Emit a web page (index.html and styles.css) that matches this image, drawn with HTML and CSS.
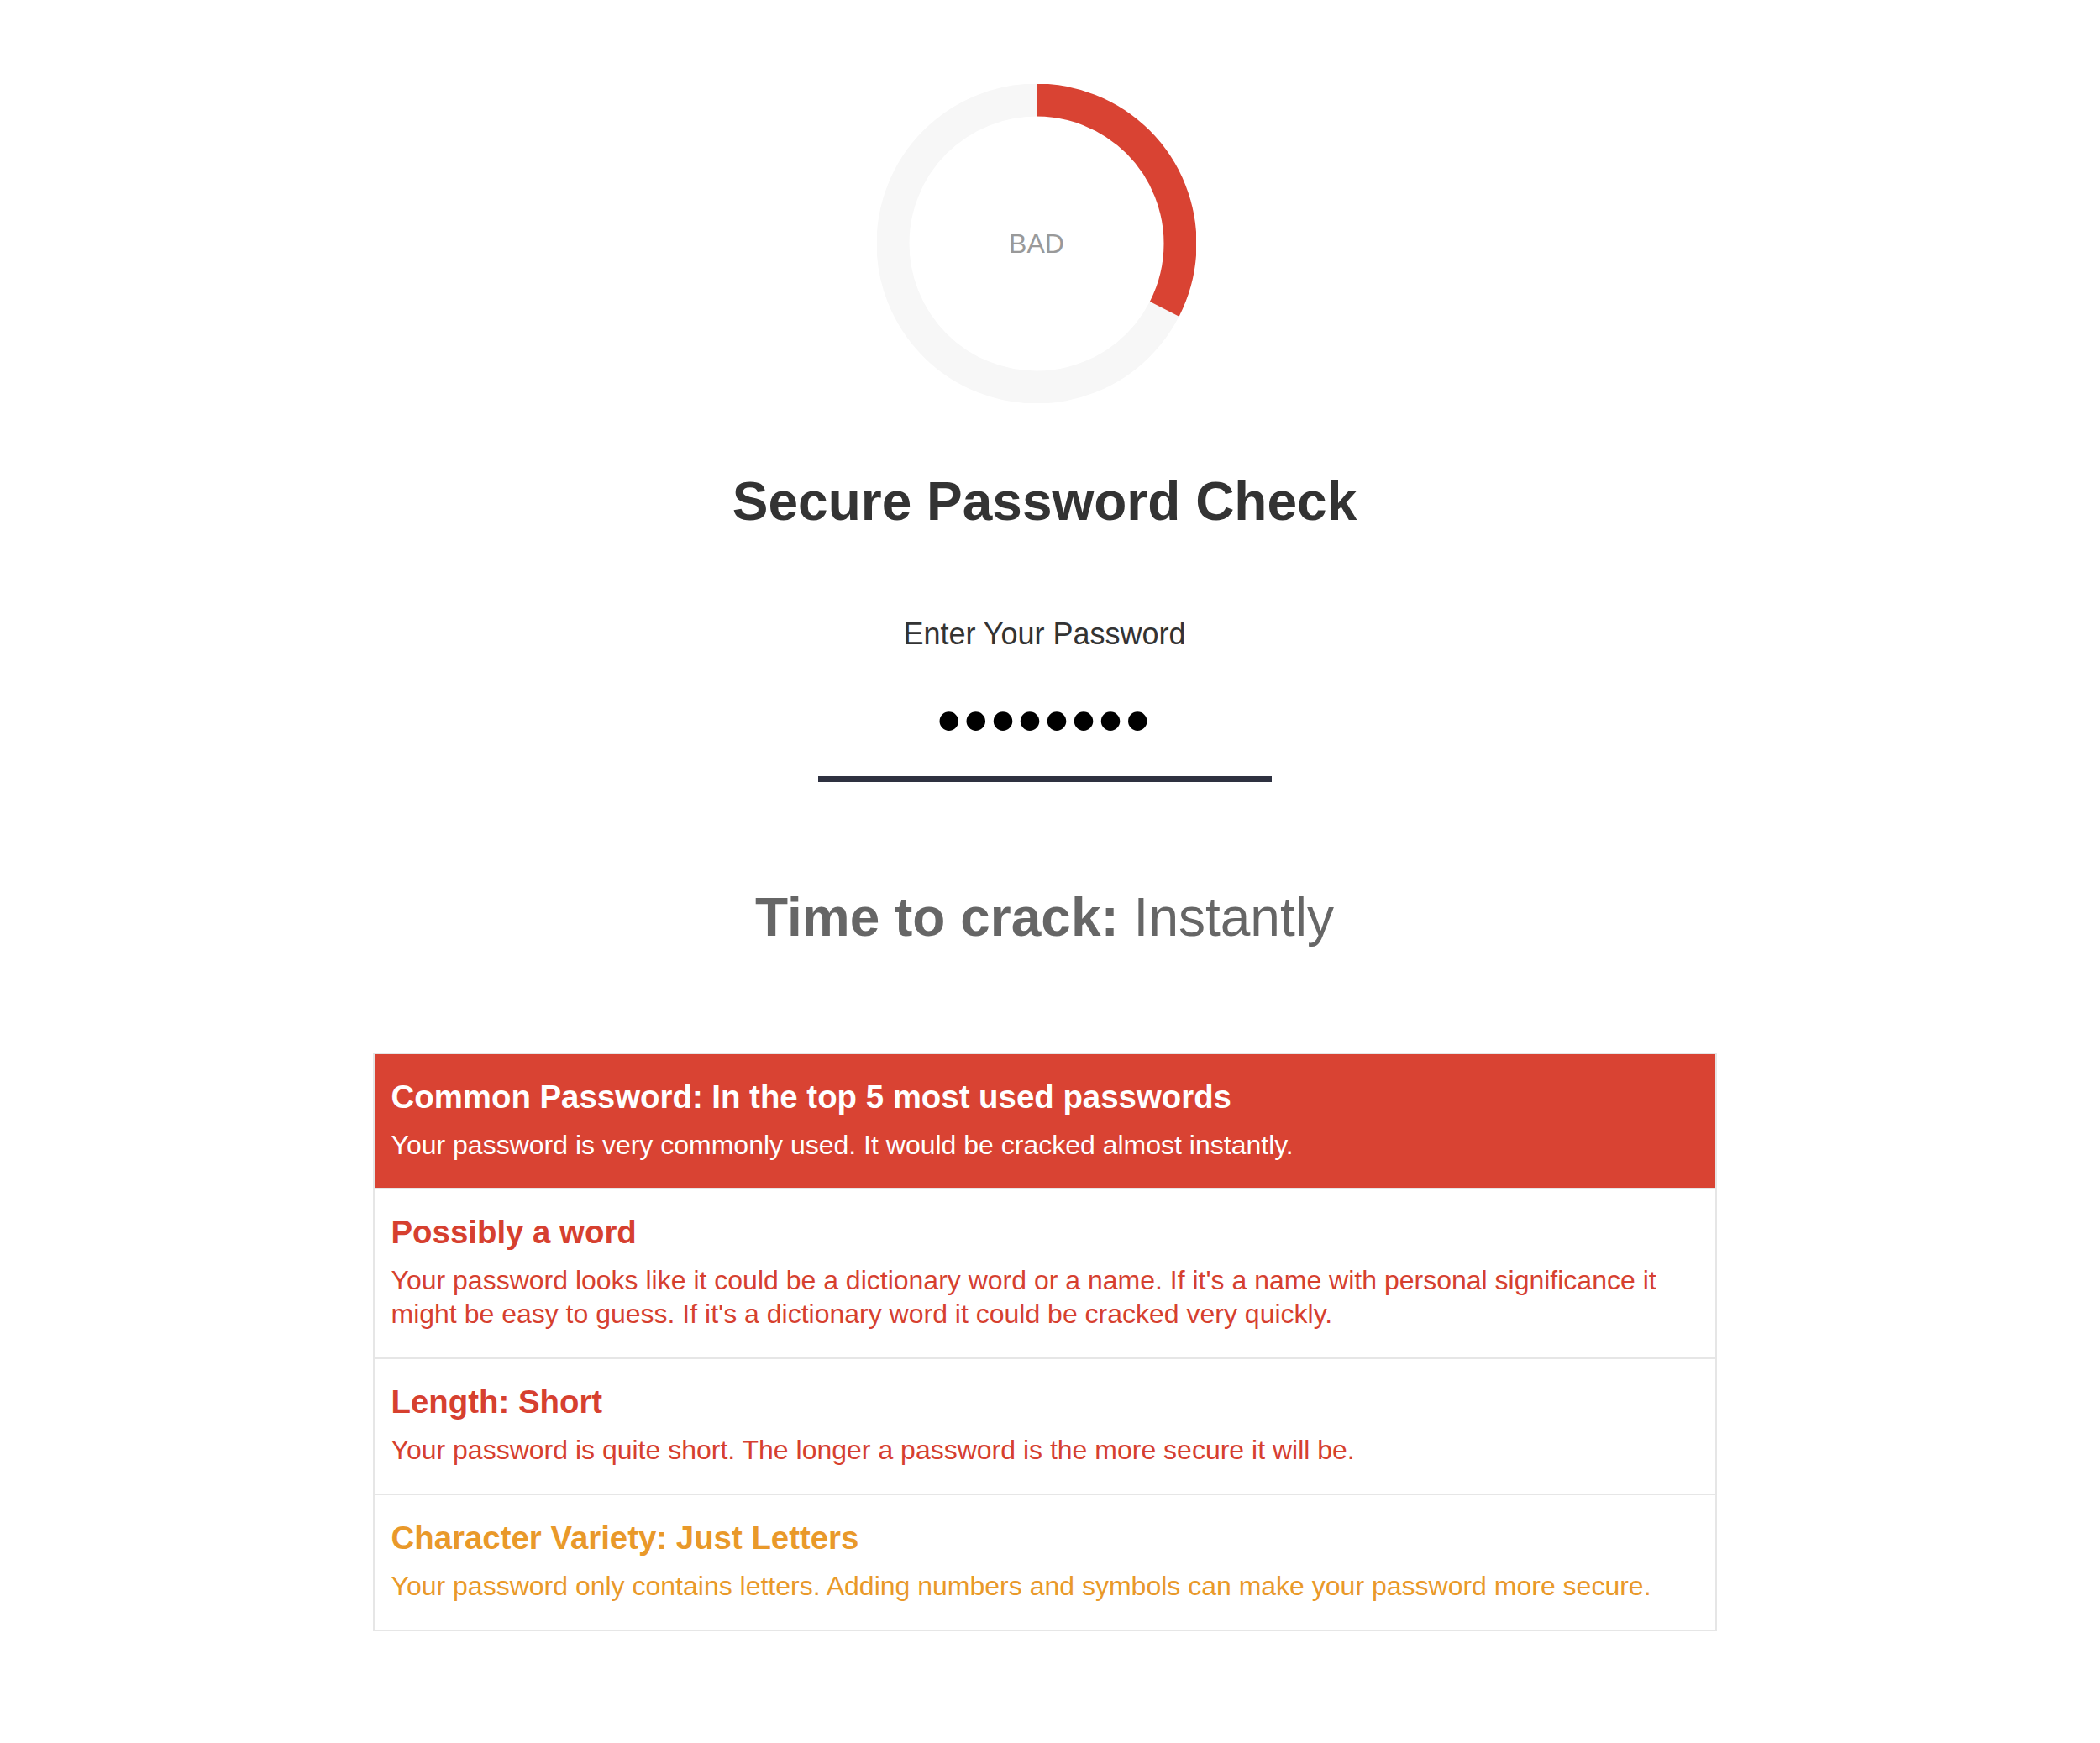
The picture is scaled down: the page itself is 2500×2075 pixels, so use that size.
FILE: index.html
```html
<!DOCTYPE html>
<html lang="en">
<head>
<meta charset="utf-8">
<title>Secure Password Check</title>
<link rel="stylesheet" href="styles.css">
</head>
<body>
<main class="page">
  <div class="meter">
    <svg class="meter-svg" width="380" height="380" viewBox="0 0 380 380">
      <circle class="meter-track" cx="190" cy="190" r="171"></circle>
      <circle class="meter-bar" cx="190" cy="190" r="171" transform="rotate(-90 190 190)"></circle>
      <text class="meter-label" x="190" y="190">BAD</text>
    </svg>
  </div>

  <h1 class="title">Secure Password Check</h1>

  <label class="field-label" for="pw">Enter Your Password</label>
  <input class="field-input" id="pw" type="password" value="password">

  <h2 class="crack"><strong>Time to crack:</strong> Instantly</h2>

  <ul class="results">
    <li class="result result-critical">
      <h3 class="result-title">Common Password: In the top 5 most used passwords</h3>
      <p class="result-text">Your password is very commonly used. It would be cracked almost instantly.</p>
    </li>
    <li class="result result-bad">
      <h3 class="result-title">Possibly a word</h3>
      <p class="result-text">Your password looks like it could be a dictionary word or a name. If it's a name with personal significance it might be easy to guess. If it's a dictionary word it could be cracked very quickly.</p>
    </li>
    <li class="result result-bad">
      <h3 class="result-title">Length: Short</h3>
      <p class="result-text">Your password is quite short. The longer a password is the more secure it will be.</p>
    </li>
    <li class="result result-warn">
      <h3 class="result-title">Character Variety: Just Letters</h3>
      <p class="result-text">Your password only contains letters. Adding numbers and symbols can make your password more secure.</p>
    </li>
  </ul>
</main>
</body>
</html>
```

FILE: styles.css
```css
* {
  box-sizing: border-box;
}

html, body {
  margin: 0;
  padding: 0;
  background: #ffffff;
}

body {
  font-family: "Liberation Sans", Arial, Helvetica, sans-serif;
  color: #333333;
}

.page {
  width: 2487px;
  padding-top: 100px;
  padding-bottom: 120px;
  display: flex;
  flex-direction: column;
  align-items: center;
}

.meter {
  width: 380px;
  height: 380px;
  margin-right: 19px;
}

.meter-svg {
  display: block;
}

.meter-track {
  fill: none;
  stroke: #f7f7f7;
  stroke-width: 39;
}

.meter-bar {
  fill: none;
  stroke: #d94333;
  stroke-width: 39;
  stroke-dasharray: 349.2 2000;
}

.meter-label {
  font-family: "Liberation Sans", Arial, sans-serif;
  font-size: 32px;
  fill: #999999;
  text-anchor: middle;
  dominant-baseline: central;
}

.title {
  margin: 79px 0 0;
  font-size: 64px;
  line-height: 1.2;
  font-weight: 700;
  color: #333333;
}

.field-label {
  display: block;
  margin-top: 97px;
  font-size: 36px;
  line-height: 1.2;
  color: #333333;
}

.field-input {
  display: block;
  margin-top: 16px;
  width: 540px;
  height: 139px;
  padding: 0;
  border: none;
  border-bottom: 7px solid #2e3140;
  background: transparent;
  outline: none;
  text-align: center;
  font-family: "Liberation Sans", Arial, sans-serif;
  font-size: 83px;
  letter-spacing: 3px;
  color: #000000;
}

.crack {
  margin: 123px 0 0;
  font-size: 64px;
  line-height: 1.2;
  font-weight: 400;
  color: #666666;
}

.crack strong {
  font-weight: 700;
}

.results {
  list-style: none;
  margin: 122px 0 0;
  padding: 0;
  width: 1600px;
  border: 2px solid #e6e6e6;
}

.result {
  padding: 28px 20px 32px;
  border-top: 2px solid #e6e6e6;
}

.result:first-child {
  border-top: none;
  padding-bottom: 31px;
}

.result-title {
  margin: 0 0 14px;
  font-size: 38.4px;
  line-height: 1.2;
  font-weight: 700;
}

.result-text {
  margin: 0;
  font-size: 32px;
  line-height: 40px;
}

.result-critical {
  background: #d94333;
  color: #ffffff;
}

.result-bad {
  color: #d6402f;
}

.result-warn {
  color: #e9992a;
}
```
